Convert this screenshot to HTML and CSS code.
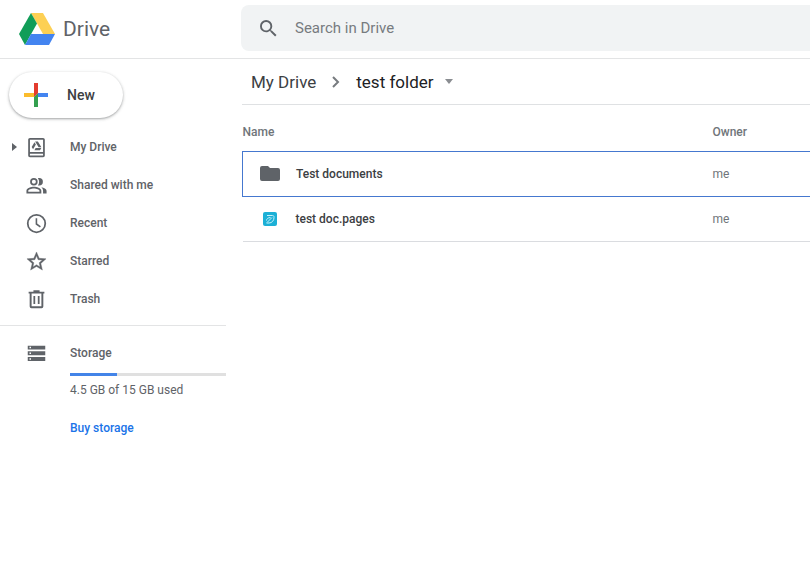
FILE: index.html
```html
<!DOCTYPE html>
<html lang="en">
<head>
<meta charset="utf-8">
<meta name="viewport" content="width=device-width, initial-scale=1">
<title>test folder - Drive</title>
<link rel="stylesheet" href="styles.css">
</head>
<body>
<header class="topbar">
  <a class="brand" href="#">
    <svg class="brand-logo" viewBox="0 0 36 32" aria-hidden="true">
      <path fill="#fdd054" d="M12 0h12l12 21H24z"/>
      <path fill="#119d58" d="M12 0l6 10.500L6 32 0 21z"/>
      <path fill="#4384f0" d="M12 21h24l-6 11H6z"/>
    </svg>
    <span>Drive</span>
  </a>
  <form class="search" role="search">
    <label class="search-label" for="q" aria-label="Search in Drive">
      <svg class="search-icon" viewBox="3 3 18 18" aria-hidden="true"><path d="M15.500 14h-.79l-.28-.27A6.470 6.470 0 0 0 16 9.500 6.500 6.500 0 1 0 9.500 16c1.610 0 3.090-.59 4.230-1.570l.27.28v.79l5 4.990L20.490 19l-4.990-5zm-6 0C7.010 14 5 11.990 5 9.500S7.010 5 9.500 5 14 7.010 14 9.500 11.990 14 9.500 14z"/></svg>
    </label>
    <input class="search-input" id="q" type="text" placeholder="Search in Drive">
  </form>
</header>
<div class="layout">
  <aside class="sidebar">
    <button class="new-button" type="button">
      <svg class="new-icon" viewBox="0 0 24 24" aria-hidden="true">
        <path fill="#fbbc2c" d="M0 10h10v4H0z"/>
        <path fill="#4384f0" d="M14 10h10v4H10z"/>
        <path fill="#34a04f" d="M10 14l4-4v14h-4z"/>
        <path fill="#e33b2e" d="M10 0h4v10l-4 4z"/>
      </svg>
      <span>New</span>
    </button>
    <nav class="nav">
      <a class="nav-item" href="#">
        <svg class="expand" viewBox="0 0 5 8" aria-hidden="true"><path d="M0 0l5 4-5 4z"/></svg>
        <svg class="nav-icon" viewBox="0 0 24 24" aria-hidden="true"><path fill-rule="evenodd" d="M4.500 1h15c1.100 0 2 .9 2 2v18c0 1.100-.9 2-2 2h-15c-1.100 0-2-.9-2-2V3c0-1.100.9-2 2-2zm0 2v14h15V3zm0 16v2h15v-2z"/><path d="M10.400 5h3.200l4 6.700h-3.200zM9.700 6l1.600 2.700-3.200 5.400-1.600-2.700zM11 12.500h6.500L16 15H9.600z"/></svg>
        <span>My Drive</span>
      </a>
      <a class="nav-item" href="#">
        <svg class="nav-icon" viewBox="0 0 24 24" aria-hidden="true"><path fill-rule="evenodd" d="M9 3.500a4.300 4.300 0 1 1 0 8.600 4.300 4.300 0 0 1 0-8.600zm0 2a2.300 2.300 0 1 0 0 4.600 2.300 2.300 0 0 0 0-4.600zM9 13.500c-3 0-8.500 1.500-8.500 4.500v3h17v-3c0-3-5.500-4.500-8.500-4.500zM2.600 19v-1c0-1 3.400-2.500 6.400-2.500s6.400 1.500 6.400 2.500v1z"/><path d="M15 3.500a4.300 4.300 0 0 1 0 8.600c-.5 0-1-.1-1.400-.2 1.900-2.400 1.900-5.800 0-8.200.4-.1.900-.2 1.400-.2zM17.500 13.900c3 .6 6 2 6 4.100v3h-4v-3c0-1.700-.8-3.100-2-4.100z"/></svg>
        <span>Shared with me</span>
      </a>
      <a class="nav-item" href="#">
        <svg class="nav-icon" viewBox="0 0 24 24" aria-hidden="true"><path fill-rule="evenodd" d="M12 1a11 11 0 1 1 0 22 11 11 0 0 1 0-22zm0 2a9 9 0 1 0 0 18 9 9 0 0 0 0-18z"/><path d="M11 6h1.800v6l4.200 3-1.100 1.600L11 13z"/></svg>
        <span>Recent</span>
      </a>
      <a class="nav-item" href="#">
        <svg class="nav-icon" viewBox="1 1 22 22" aria-hidden="true"><path stroke="#5f6368" stroke-width=".4" d="M22 9.240l-7.190-.62L12 2 9.190 8.630 2 9.240l5.460 4.730L5.820 21 12 17.270 18.180 21l-1.630-7.030L22 9.240zM12 15.400l-3.760 2.270 1-4.280-3.320-2.880 4.380-.38L12 6.100l1.710 4.040 4.380.38-3.320 2.880 1 4.280L12 15.400z"/></svg>
        <span>Starred</span>
      </a>
      <a class="nav-item" href="#">
        <svg class="nav-icon" viewBox="0 0 24 24" aria-hidden="true"><path fill-rule="evenodd" d="M8.500 1.500h7V3H21v2.200h-1.200V20a2 2 0 0 1-2 2H6.200a2 2 0 0 1-2-2V5.200H3V3h5.500zM6.400 5.200v14.600h11.200V5.200zM8.500 8h2v9h-2zm5 0h2v9h-2z"/></svg>
        <span>Trash</span>
      </a>
    </nav>
    <section class="storage">
      <svg class="nav-icon" viewBox="0 0 24 24" aria-hidden="true"><path fill-rule="evenodd" d="M2 3h20v4.500H2zm2 1.400v1.700h1.700V4.400zM2 9.500h20V14H2zm2 1.400v1.700h1.700v-1.700zM2 16h20v4.500H2zm2 1.400v1.700h1.700v-1.700z"/></svg>
      <div class="storage-body">
        <a class="storage-title" href="#">Storage</a>
        <div class="meter"><div class="meter-fill" style="width: 30%"></div></div>
        <div class="storage-used">4.5 GB of 15 GB used</div>
        <a class="buy" href="#">Buy storage</a>
      </div>
    </section>
  </aside>
  <main class="content">
    <nav class="crumbs" aria-label="Folder path">
      <a class="crumb" href="#">My Drive</a>
      <svg class="chevron" viewBox="0 0 8 12" aria-hidden="true"><path d="M1 1l5 5-5 5"/></svg>
      <button class="crumb crumb-current" type="button">test folder
        <svg class="caret" viewBox="0 0 8 5" aria-hidden="true"><path d="M0 0h8L4 5z"/></svg>
      </button>
    </nav>
    <table class="files">
      <thead>
        <tr><th class="col-name" scope="col">Name</th><th scope="col">Owner</th></tr>
      </thead>
      <tbody>
        <tr class="selected">
          <td><div class="file">
            <svg class="file-icon" viewBox="0 0 20 16" aria-hidden="true"><path fill="#5f6368" d="M2 0h6l2 2h8a2 2 0 0 1 2 2v9a2 2 0 0 1-2 2H2a2 2 0 0 1-2-2V2a2 2 0 0 1 2-2z"/></svg>
            <span>Test documents</span></div></td>
          <td class="owner">me</td>
        </tr>
        <tr>
          <td><div class="file">
            <svg class="file-icon" viewBox="0 0 20 16" aria-hidden="true"><rect x="3" y="1" width="14" height="14" rx="2" fill="#1cb0d6"/><path d="M7 4.500h5.500a1.500 1.500 0 0 1 1.500 2c0 3-2 5.500-5 5.500H6.500M12 6.500l-5 5M6.500 9.500c0-1.500 1.500-3 4-3" fill="none" stroke="#c5f1fb"/></svg>
            <span>test doc.pages</span></div></td>
          <td class="owner">me</td>
        </tr>
      </tbody>
    </table>
  </main>
</div>
</body>
</html>
```
FILE: styles.css
```css
* {
  box-sizing: border-box;
}

body {
  margin: 0;
  background: #fff;
  color: #5f6368;
  font: 500 12px/16px Roboto, sans-serif;
}

a {
  color: inherit;
  text-decoration: none;
}

button {
  border: 0;
  background: none;
  padding: 0;
  font: inherit;
  color: inherit;
  cursor: pointer;
}

svg {
  display: block;
  flex: none;
  fill: #5f6368;
}

.topbar {
  display: grid;
  grid-template-columns: 241px 1fr;
  align-items: start;
  border-bottom: 1px solid #e3e4e5;
}

.brand {
  display: flex;
  align-items: center;
  gap: 8px;
  height: 58px;
  padding-left: 19px;
  font: 400 21px/28px Roboto, sans-serif;
}

.brand-logo {
  width: 36px;
  height: 32px;
}

.search {
  display: flex;
  align-items: center;
  gap: 18px;
  height: 46px;
  margin-top: 5px;
  padding-left: 19px;
  border-radius: 8px 0 0 8px;
  background: #f1f3f4;
}

.search-icon {
  width: 17px;
  height: 17px;
}

.search-input {
  flex: 1;
  min-width: 0;
  padding: 0;
  border: 0;
  outline: 0;
  background: none;
  color: #5f6368;
  font: 400 15px/20px Roboto, sans-serif;
}

.search-input::placeholder {
  color: #777b7f;
  opacity: 1;
}

.layout {
  display: grid;
  grid-template-columns: 226px 1fr;
  column-gap: 16px;
}

.new-button {
  display: flex;
  align-items: center;
  gap: 19px;
  height: 46px;
  margin: 13px 0 10px 9px;
  padding: 0 28px 0 15px;
  border-radius: 23px;
  background: #fff;
  box-shadow: 0 1px 2px rgba(60, 64, 67, .35), 0 1px 3px 1px rgba(60, 64, 67, .12);
  color: #3c4043;
  font: 500 14px/20px Roboto, sans-serif;
}

.new-icon {
  width: 24px;
  height: 24px;
}

.nav {
  padding-bottom: 7px;
  border-bottom: 1px solid #e3e4e5;
}

.nav-item {
  position: relative;
  display: flex;
  align-items: center;
  gap: 23px;
  height: 38px;
  padding-left: 26px;
}

.expand {
  position: absolute;
  left: 12px;
  width: 5px;
  height: 8px;
}

.nav-icon {
  width: 21px;
  height: 21px;
}

.storage {
  display: flex;
  gap: 23px;
  padding: 17px 0 0 26px;
}

.storage-body {
  flex: 1;
  padding-top: 2px;
}

.storage-title {
  display: block;
}

.meter {
  height: 3px;
  margin: 12px 0 6px;
  background: #e0e0e0;
}

.meter-fill {
  height: 100%;
  background: #4384e8;
}

.storage-used {
  font-weight: 400;
}

.buy {
  display: inline-block;
  margin-top: 22px;
  color: #1a73e8;
}

.crumbs {
  display: flex;
  align-items: center;
  height: 46px;
  padding-left: 9px;
  border-bottom: 1px solid #dfe1e3;
}

.crumb {
  font: 400 17px/24px Roboto, sans-serif;
  color: #3c4043;
}

.chevron {
  width: 8px;
  height: 12px;
  margin: 0 16px;
  fill: none;
  stroke: #777b7f;
  stroke-width: 2;
}

.crumb-current {
  display: flex;
  align-items: center;
  gap: 11px;
  color: #202124;
}

.caret {
  width: 8px;
  height: 5px;
  fill: #8a8d91;
}

.files {
  width: 100%;
  border-collapse: collapse;
  text-align: left;
}

.files th {
  height: 46px;
  padding: 8px 0 0;
  font-weight: 500;
  color: #70757a;
}

.col-name {
  width: 470px;
}

.files td {
  height: 45px;
  padding: 0;
  border-bottom: 1px solid #dadce0;
  color: #3c4043;
}

.files .selected td {
  border-top: 1px solid #4578cf;
  border-bottom: 1px solid #4578cf;
}

.files .selected td:first-child {
  border-left: 1px solid #4578cf;
}

.file {
  display: flex;
  align-items: center;
  gap: 16px;
  padding-left: 17px;
}

.file-icon {
  width: 20px;
  height: 16px;
}

.files .owner {
  color: #70757a;
  font-weight: 400;
}
```
